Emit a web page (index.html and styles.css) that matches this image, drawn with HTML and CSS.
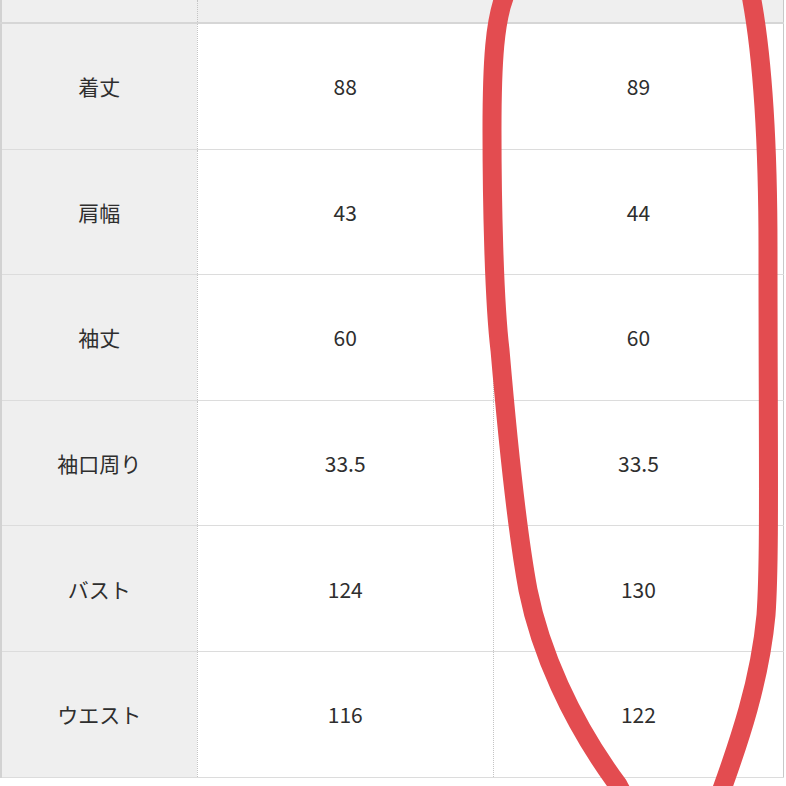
FILE: index.html
```html
<!DOCTYPE html>
<html>
<head>
    <title>サイズ表</title>
    <link rel="stylesheet" href="styles.css">
</head>
<body>
    <div class="sheet">
        <table class="size-table">
            <colgroup>
                <col class="col-label">
                <col class="col-size">
                <col class="col-size2">
            </colgroup>
            <tr class="head">
                <th></th><td></td><td></td>
            </tr>
            <tr><th>着丈</th><td>88</td><td>89</td></tr>
            <tr><th>肩幅</th><td>43</td><td>44</td></tr>
            <tr><th>袖丈</th><td>60</td><td>60</td></tr>
            <tr><th>袖口周り</th><td>33.5</td><td>33.5</td></tr>
            <tr><th>バスト</th><td>124</td><td>130</td></tr>
            <tr><th>ウエスト</th><td>116</td><td>122</td></tr>
        </table>

        <!-- 手書きの丸印 -->
        <svg class="marker" width="786" height="786" viewBox="0 0 786 786">
            <path d="M 505 -5
                     C 495 20, 492 60, 492 130
                     C 492 200, 494 300, 500 350
                     C 506 420, 515 520, 528 590
                     C 540 650, 570 720, 618 785
                     C 640 830, 700 840, 718 800
                     C 740 740, 760 680, 766 615
                     C 770 560, 768 450, 768 250
                     C 768 120, 760 40, 750 -10
                     C 735 -60, 540 -60, 505 -5 Z"
                  fill="none" stroke="#e34c50" stroke-width="19" stroke-linecap="round" stroke-linejoin="round"/>
        </svg>
    </div>
</body>
</html>
```

FILE: styles.css
```css
body {
    margin: 0;
    background-color: #fff;
    font-family: "Noto Sans CJK JP", "Noto Sans", sans-serif;
    color: #2e2e2e;
}

.sheet {
    position: relative;
    width: 786px;
    height: 786px;
    overflow: hidden;
}

.size-table {
    border-collapse: collapse;
    table-layout: fixed;
    width: 784px;
    border-left: 2px solid #d2d2d2;
    border-right: 1px solid #c8c8c8;
}

.col-label { width: 196px; }
.col-size { width: 296px; }
.col-size2 { width: 290px; }

.size-table th,
.size-table td {
    height: 124.6px;
    padding: 0;
    text-align: center;
    vertical-align: middle;
    font-size: 21px;
    font-weight: normal;
    border-bottom: 1px solid #dcdcdc;
    border-left: 1px dotted #c4c4c4;
}

.size-table th {
    background-color: #efefef;
}

.size-table .head th,
.size-table .head td {
    height: 22px;
    background-color: #efefef;
    border-bottom: 2px solid #d6d6d6;
}

.marker {
    position: absolute;
    top: 0;
    left: 0;
    overflow: visible;
}
```
